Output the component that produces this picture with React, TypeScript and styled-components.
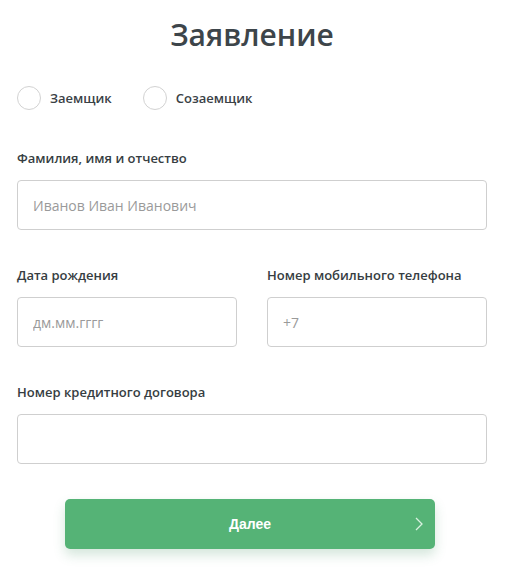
import React, { useState } from "react";
import styled, { createGlobalStyle } from "styled-components";

const GlobalStyle = createGlobalStyle`
  body {
    margin: 0;
    background: #ffffff;
    font-family: "Open Sans", "Noto Sans", sans-serif;
  }
`;

const Page = styled.div`
  width: 470px;
  padding: 15px 0 24px 17px;
`;

const Title = styled.h1`
  margin: 0;
  font-size: 30px;
  line-height: 40px;
  font-weight: 600;
  color: #3d454a;
  text-align: center;
`;

const RadioRow = styled.div`
  display: flex;
  align-items: center;
  gap: 31px;
  margin-top: 31px;
`;

const RadioOption = styled.label`
  display: flex;
  align-items: center;
  gap: 9px;
  font-size: 13px;
  font-weight: 600;
  color: #3a4146;
  cursor: pointer;
`;

const RadioCircle = styled.span<{ $checked: boolean }>`
  width: 22px;
  height: 22px;
  border-radius: 50%;
  border: 1px solid #d2d2d2;
  background: ${(p) => (p.$checked ? "radial-gradient(#55b376 40%, #fff 45%)" : "#fff")};
`;

const FieldGroup = styled.div<{ $top: number }>`
  display: flex;
  flex-direction: column;
  gap: 13px;
  margin-top: ${(p) => p.$top}px;
`;

const FieldRow = styled.div`
  display: grid;
  grid-template-columns: 220px 220px;
  column-gap: 30px;
  margin-top: 36px;
`;

const Label = styled.div`
  font-size: 13px;
  line-height: 18px;
  font-weight: 600;
  color: #363d42;
`;

const Input = styled.input`
  box-sizing: border-box;
  width: 100%;
  height: 50px;
  padding: 0 15px;
  border: 1px solid #cfcfcf;
  border-radius: 4px;
  font-family: "Open Sans", "Noto Sans", sans-serif;
  font-size: 14px;
  color: #333;
  outline: none;

  &::placeholder {
    color: #9a9a9a;
  }
`;

const Button = styled.button`
  position: relative;
  display: flex;
  align-items: center;
  justify-content: center;
  width: 370px;
  height: 50px;
  margin: 35px 0 0 48px;
  border: none;
  border-radius: 5px;
  background: #55b376;
  box-shadow: 0 6px 12px rgba(60, 140, 90, 0.22);
  color: #ffffff;
  font-family: "Liberation Sans", Arial, sans-serif;
  font-size: 14px;
  font-weight: 700;
  cursor: pointer;
`;

const Chevron = styled.svg`
  position: absolute;
  right: 12px;
  top: 18px;
`;

const App: React.FC = () => {
  const [role, setRole] = useState<string>("");

  return (
    <Page>
      <GlobalStyle />
      <Title>Заявление</Title>
      <RadioRow>
        {["Заемщик", "Созаемщик"].map((name) => (
          <RadioOption key={name} onClick={() => setRole(name)}>
            <RadioCircle $checked={role === name} />
            {name}
          </RadioOption>
        ))}
      </RadioRow>
      <FieldGroup $top={39}>
        <Label>Фамилия, имя и отчество</Label>
        <Input placeholder="Иванов Иван Иванович" />
      </FieldGroup>
      <FieldRow>
        <FieldGroup $top={0}>
          <Label>Дата рождения</Label>
          <Input placeholder="дм.мм.гггг" />
        </FieldGroup>
        <FieldGroup $top={0}>
          <Label>Номер мобильного телефона</Label>
          <Input placeholder="+7" />
        </FieldGroup>
      </FieldRow>
      <FieldGroup $top={36}>
        <Label>Номер кредитного договора</Label>
        <Input />
      </FieldGroup>
      <Button>
        Далее
        <Chevron width="8" height="14" viewBox="0 0 8 14">
          <path d="M1 1l6 6-6 6" fill="none" stroke="#d9f1e0" strokeWidth="1.3" />
        </Chevron>
      </Button>
    </Page>
  );
};

export default App;
